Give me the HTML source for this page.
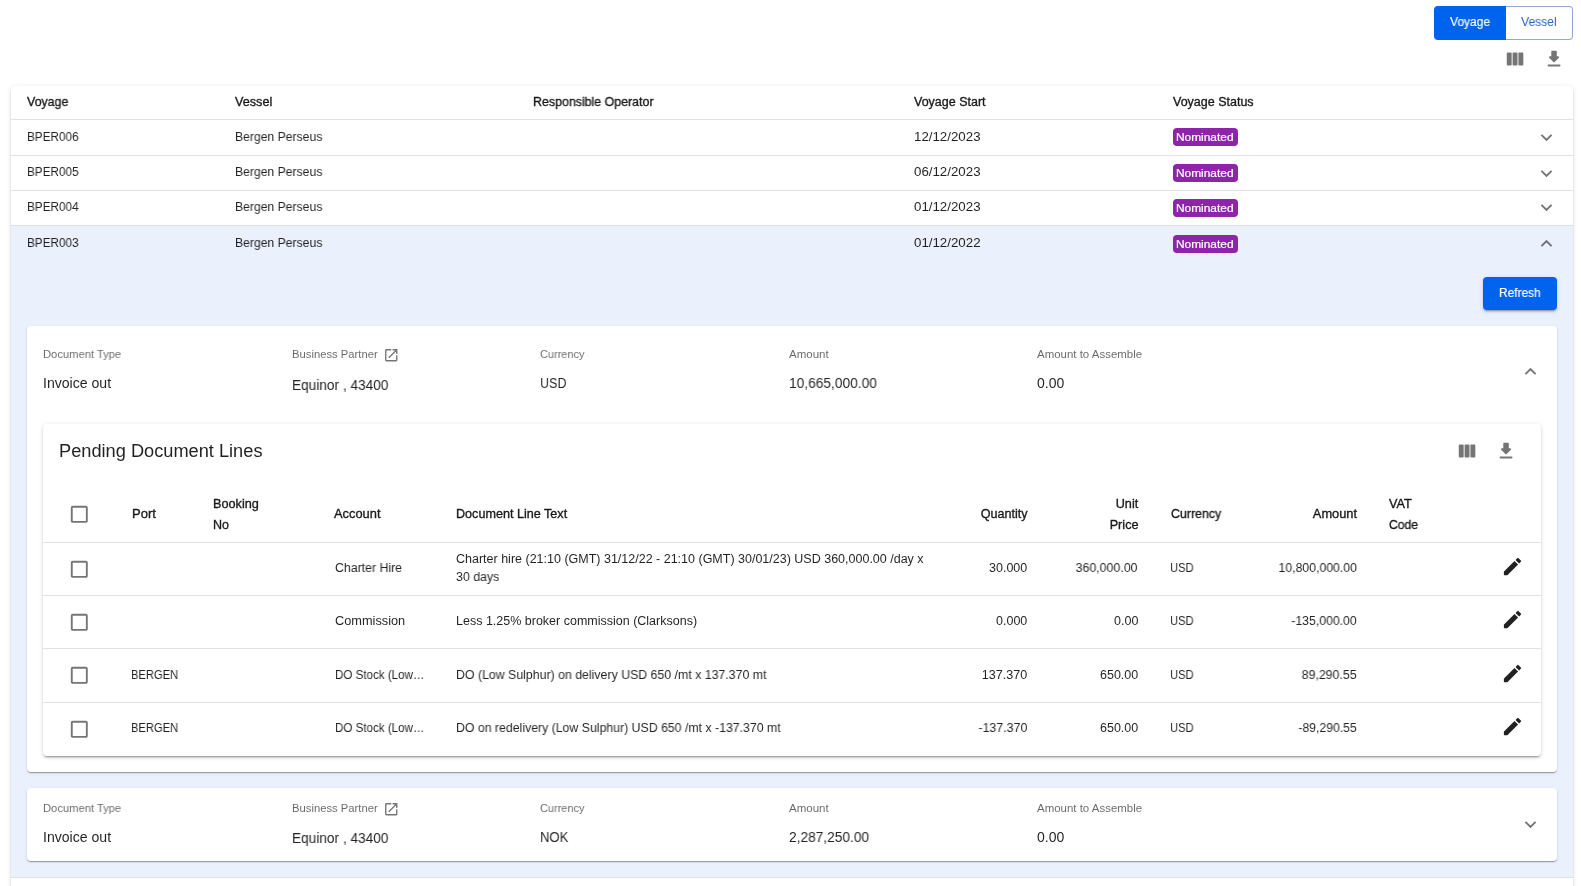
<!DOCTYPE html>
<html><head><meta charset="utf-8">
<style>
*{box-sizing:border-box;margin:0;padding:0}
html,body{width:1581px;height:886px;overflow:hidden;background:#fff}
body{position:relative;font-family:"Liberation Sans",sans-serif;color:rgba(0,0,0,0.87)}
.a{position:absolute}
.t{position:absolute;white-space:nowrap;line-height:1;will-change:transform}
svg{position:absolute;display:block}
</style></head><body>
<div class="a" style="left:1434px;top:6px;width:72px;height:34px;background:#0063ed;border-radius:4px 0 0 4px"></div>
<div class="a" style="left:1506px;top:6px;width:67px;height:34px;border:1px solid #90a8d2;border-left:none;border-radius:0 4px 4px 0"></div>
<div class="t" style="top:16px;font-size:12.5px;left:1449.5px;-webkit-text-stroke:0.35px currentColor;-webkit-text-stroke:0.15px currentColor;color:#fff;transform:scaleX(0.9625);transform-origin:left center;">Voyage</div>
<div class="t" style="top:16px;font-size:12.5px;left:1521.2px;color:#2862c6;transform:scaleX(0.97);transform-origin:left center;">Vessel</div>
<svg style="left:1504.1px;top:48px" width="22.1" height="22.1" viewBox="0 0 24 24"><g fill="rgba(0,0,0,0.54)"><rect x="3" y="5" width="5.33" height="14" rx="1"/><rect x="9.33" y="5" width="5.34" height="14" rx="1"/><rect x="15.67" y="5" width="5.33" height="14" rx="1"/></g></svg>
<svg style="left:1543.1px;top:48.1px" width="22.1" height="22.1" viewBox="0 0 24 24"><path fill="rgba(0,0,0,0.54)" d="M16.59 9H15V4c0-.55-.45-1-1-1h-4c-.55 0-1 .45-1 1v5H7.41c-.89 0-1.34 1.08-.71 1.71l4.59 4.59c.39.39 1.02.39 1.41 0l4.59-4.59c.63-.63.19-1.71-.7-1.71zM5 19c0 .55.45 1 1 1h12c.55 0 1-.45 1-1s-.45-1-1-1H6c-.55 0-1 .45-1 1z"/></svg>
<div class="a" style="left:11px;top:86px;width:1562px;height:900px;background:#fff;border-radius:4px;box-shadow:0px 3px 1px -2px rgba(0,0,0,0.2),0px 2px 2px 0px rgba(0,0,0,0.14),0px 1px 5px 0px rgba(0,0,0,0.12);"></div>
<div class="a" style="left:11px;top:225.5px;width:1562px;height:651.5px;background:#eaf1fd"></div>
<div class="a" style="left:11px;top:119px;width:1562px;height:1px;background:#e0e0e0"></div>
<div class="a" style="left:11px;top:155px;width:1562px;height:1px;background:#e0e0e0"></div>
<div class="a" style="left:11px;top:190px;width:1562px;height:1px;background:#e0e0e0"></div>
<div class="a" style="left:11px;top:225px;width:1562px;height:1px;background:#e0e0e0"></div>
<div class="a" style="left:11px;top:877px;width:1562px;height:1px;background:#e0e0e0"></div>
<div class="t" style="top:96px;font-size:12.5px;left:27px;-webkit-text-stroke:0.35px currentColor;transform:scaleX(0.991);transform-origin:left center;">Voyage</div>
<div class="t" style="top:96px;font-size:12.5px;left:235px;-webkit-text-stroke:0.35px currentColor;transform:scaleX(1.011);transform-origin:left center;">Vessel</div>
<div class="t" style="top:96px;font-size:12.5px;left:533px;-webkit-text-stroke:0.35px currentColor;transform:scaleX(0.991);transform-origin:left center;">Responsible Operator</div>
<div class="t" style="top:96px;font-size:12.5px;left:914px;-webkit-text-stroke:0.35px currentColor;">Voyage Start</div>
<div class="t" style="top:96px;font-size:12.5px;left:1173px;-webkit-text-stroke:0.35px currentColor;">Voyage Status</div>
<div class="t" style="top:131px;font-size:12.5px;left:27px;transform:scaleX(0.9391);transform-origin:left center;">BPER006</div>
<div class="t" style="top:131px;font-size:12.5px;left:235px;transform:scaleX(0.9737);transform-origin:left center;">Bergen Perseus</div>
<div class="t" style="top:131px;font-size:12.5px;left:914px;transform:scaleX(1.0634);transform-origin:left center;">12/12/2023</div>
<div class="a" style="left:1173px;top:128px;width:65px;height:18px;background:#8e24aa;border-radius:4px"></div>
<div class="t" style="top:132px;font-size:11.5px;left:1176.2px;-webkit-text-stroke:0.2px currentColor;color:#fff;transform:scaleX(1.0343);transform-origin:left center;">Nominated</div>
<svg style="left:1534.95px;top:125.7px" width="23" height="23" viewBox="0 0 24 24"><path fill="rgba(0,0,0,0.54)" d="M16.59 8.59 12 13.17 7.41 8.59 6 10l6 6 6-6z"/></svg>
<div class="t" style="top:166px;font-size:12.5px;left:27px;transform:scaleX(0.9391);transform-origin:left center;">BPER005</div>
<div class="t" style="top:166px;font-size:12.5px;left:235px;transform:scaleX(0.9737);transform-origin:left center;">Bergen Perseus</div>
<div class="t" style="top:166px;font-size:12.5px;left:914px;transform:scaleX(1.0634);transform-origin:left center;">06/12/2023</div>
<div class="a" style="left:1173px;top:164px;width:65px;height:18px;background:#8e24aa;border-radius:4px"></div>
<div class="t" style="top:168px;font-size:11.5px;left:1176.2px;-webkit-text-stroke:0.2px currentColor;color:#fff;transform:scaleX(1.0343);transform-origin:left center;">Nominated</div>
<svg style="left:1534.95px;top:161.7px" width="23" height="23" viewBox="0 0 24 24"><path fill="rgba(0,0,0,0.54)" d="M16.59 8.59 12 13.17 7.41 8.59 6 10l6 6 6-6z"/></svg>
<div class="t" style="top:201px;font-size:12.5px;left:27px;transform:scaleX(0.9391);transform-origin:left center;">BPER004</div>
<div class="t" style="top:201px;font-size:12.5px;left:235px;transform:scaleX(0.9737);transform-origin:left center;">Bergen Perseus</div>
<div class="t" style="top:201px;font-size:12.5px;left:914px;transform:scaleX(1.0634);transform-origin:left center;">01/12/2023</div>
<div class="a" style="left:1173px;top:199px;width:65px;height:18px;background:#8e24aa;border-radius:4px"></div>
<div class="t" style="top:203px;font-size:11.5px;left:1176.2px;-webkit-text-stroke:0.2px currentColor;color:#fff;transform:scaleX(1.0343);transform-origin:left center;">Nominated</div>
<svg style="left:1534.95px;top:196.4px" width="23" height="23" viewBox="0 0 24 24"><path fill="rgba(0,0,0,0.54)" d="M16.59 8.59 12 13.17 7.41 8.59 6 10l6 6 6-6z"/></svg>
<div class="t" style="top:237px;font-size:12.5px;left:27px;transform:scaleX(0.9391);transform-origin:left center;">BPER003</div>
<div class="t" style="top:237px;font-size:12.5px;left:235px;transform:scaleX(0.9737);transform-origin:left center;">Bergen Perseus</div>
<div class="t" style="top:237px;font-size:12.5px;left:914px;transform:scaleX(1.0634);transform-origin:left center;">01/12/2022</div>
<div class="a" style="left:1173px;top:235px;width:65px;height:18px;background:#8e24aa;border-radius:4px"></div>
<div class="t" style="top:239px;font-size:11.5px;left:1176.2px;-webkit-text-stroke:0.2px currentColor;color:#fff;transform:scaleX(1.0343);transform-origin:left center;">Nominated</div>
<svg style="left:1534.95px;top:231.7px" width="23" height="23" viewBox="0 0 24 24"><path fill="rgba(0,0,0,0.54)" d="M12 8l-6 6 1.41 1.41L12 10.83l4.59 4.58L18 14z"/></svg>
<div class="a" style="left:1483px;top:277px;width:74px;height:33px;background:#0063ed;border-radius:4px;box-shadow:0px 3px 1px -2px rgba(0,0,0,0.2),0px 2px 2px 0px rgba(0,0,0,0.14),0px 1px 5px 0px rgba(0,0,0,0.12)"></div>
<div class="t" style="top:287px;font-size:12px;left:1499px;-webkit-text-stroke:0.35px currentColor;-webkit-text-stroke:0.15px currentColor;color:#fff;transform:scaleX(0.9903);transform-origin:left center;">Refresh</div>
<div class="a" style="left:27px;top:326px;width:1530px;height:446px;background:#fff;border-radius:4px;box-shadow:0px 2px 1px -1px rgba(0,0,0,0.2),0px 1px 1px 0px rgba(0,0,0,0.14),0px 1px 3px 0px rgba(0,0,0,0.12);"></div>
<div class="t" style="top:349px;font-size:11.25px;left:43px;color:rgba(0,0,0,0.6);transform:scaleX(0.9938);transform-origin:left center;">Document Type</div>
<div class="t" style="top:349px;font-size:11.25px;left:292px;color:rgba(0,0,0,0.6);">Business Partner</div>
<svg style="left:383px;top:346.5px" width="16.5" height="16.5" viewBox="0 0 24 24"><path fill="rgba(0,0,0,0.54)" d="M19 19H5V5h7V3H5c-1.11 0-2 .9-2 2v14c0 1.1.89 2 2 2h14c1.1 0 2-.9 2-2v-7h-2v7zM14 3v2h3.59l-9.83 9.83 1.41 1.41L19 6.41V10h2V3h-7z"/></svg>
<div class="t" style="top:349px;font-size:11.25px;left:540px;color:rgba(0,0,0,0.6);transform:scaleX(0.9736);transform-origin:left center;">Currency</div>
<div class="t" style="top:349px;font-size:11.25px;left:789px;color:rgba(0,0,0,0.6);transform:scaleX(1.0242);transform-origin:left center;">Amount</div>
<div class="t" style="top:349px;font-size:11.25px;left:1037px;color:rgba(0,0,0,0.6);transform:scaleX(1.0185);transform-origin:left center;">Amount to Assemble</div>
<div class="t" style="top:376px;font-size:14px;left:43px;transform:scaleX(1.006);transform-origin:left center;">Invoice out</div>
<div class="t" style="top:378px;font-size:14px;left:292px;transform:scaleX(0.9753);transform-origin:left center;">Equinor , 43400</div>
<div class="t" style="top:376px;font-size:14px;left:540px;transform:scaleX(0.899);transform-origin:left center;">USD</div>
<div class="t" style="top:376px;font-size:14px;left:789px;transform:scaleX(0.9817);transform-origin:left center;">10,665,000.00</div>
<div class="t" style="top:376px;font-size:14px;left:1037px;">0.00</div>
<svg style="left:1518.95px;top:360px" width="23" height="23" viewBox="0 0 24 24"><path fill="rgba(0,0,0,0.54)" d="M12 8l-6 6 1.41 1.41L12 10.83l4.59 4.58L18 14z"/></svg>
<div class="a" style="left:43px;top:424px;width:1498px;height:332px;background:#fff;border-radius:4px;box-shadow:0px 3px 1px -2px rgba(0,0,0,0.2),0px 2px 2px 0px rgba(0,0,0,0.14),0px 1px 5px 0px rgba(0,0,0,0.12);"></div>
<div class="t" style="top:442px;font-size:18px;left:59.2px;transform:scaleX(1.0117);transform-origin:left center;">Pending Document Lines</div>
<svg style="left:1455.8px;top:439.8px" width="22.1" height="22.1" viewBox="0 0 24 24"><g fill="rgba(0,0,0,0.54)"><rect x="3" y="5" width="5.33" height="14" rx="1"/><rect x="9.33" y="5" width="5.34" height="14" rx="1"/><rect x="15.67" y="5" width="5.33" height="14" rx="1"/></g></svg>
<svg style="left:1494.9px;top:439.5px" width="22.1" height="22.1" viewBox="0 0 24 24"><path fill="rgba(0,0,0,0.54)" d="M16.59 9H15V4c0-.55-.45-1-1-1h-4c-.55 0-1 .45-1 1v5H7.41c-.89 0-1.34 1.08-.71 1.71l4.59 4.59c.39.39 1.02.39 1.41 0l4.59-4.59c.63-.63.19-1.71-.7-1.71zM5 19c0 .55.45 1 1 1h12c.55 0 1-.45 1-1s-.45-1-1-1H6c-.55 0-1 .45-1 1z"/></svg>
<div class="a" style="left:43px;top:542px;width:1498px;height:1px;background:#e0e0e0"></div>
<div class="a" style="left:43px;top:595px;width:1498px;height:1px;background:#e0e0e0"></div>
<div class="a" style="left:43px;top:648px;width:1498px;height:1px;background:#e0e0e0"></div>
<div class="a" style="left:43px;top:702px;width:1498px;height:1px;background:#e0e0e0"></div>
<svg style="left:68.1px;top:503.1px" width="22.6" height="22.6" viewBox="0 0 24 24"><path fill="rgba(0,0,0,0.54)" d="M19 5v14H5V5h14m0-2H5c-1.11 0-2 .9-2 2v14c0 1.1.89 2 2 2h14c1.1 0 2-.9 2-2V5c0-1.1-.9-2-2-2z"/></svg>
<div class="t" style="top:508px;font-size:12.5px;left:132px;-webkit-text-stroke:0.35px currentColor;transform:scaleX(1.0416);transform-origin:left center;">Port</div>
<div class="t" style="top:498px;font-size:12.5px;left:213px;-webkit-text-stroke:0.35px currentColor;transform:scaleX(1.0142);transform-origin:left center;">Booking</div>
<div class="t" style="top:519px;font-size:12.5px;left:213px;-webkit-text-stroke:0.35px currentColor;">No</div>
<div class="t" style="top:508px;font-size:12.5px;left:334px;-webkit-text-stroke:0.35px currentColor;transform:scaleX(1.0297);transform-origin:left center;">Account</div>
<div class="t" style="top:508px;font-size:12.5px;left:456px;-webkit-text-stroke:0.35px currentColor;transform:scaleX(1.0081);transform-origin:left center;">Document Line Text</div>
<div class="t" style="top:508px;font-size:12.5px;right:553px;-webkit-text-stroke:0.35px currentColor;transform:scaleX(1.0074);transform-origin:right center;">Quantity</div>
<div class="t" style="top:498px;font-size:12.5px;right:442.8px;-webkit-text-stroke:0.35px currentColor;transform:scaleX(1.0119);transform-origin:right center;">Unit</div>
<div class="t" style="top:519px;font-size:12.5px;right:442.8px;-webkit-text-stroke:0.35px currentColor;transform:scaleX(1.0115);transform-origin:right center;">Price</div>
<div class="t" style="top:508px;font-size:12.5px;left:1170.5px;-webkit-text-stroke:0.35px currentColor;transform:scaleX(0.9886);transform-origin:left center;">Currency</div>
<div class="t" style="top:508px;font-size:12.5px;right:224px;-webkit-text-stroke:0.35px currentColor;transform:scaleX(1.0268);transform-origin:right center;">Amount</div>
<div class="t" style="top:498px;font-size:12.5px;left:1389.3px;-webkit-text-stroke:0.35px currentColor;transform:scaleX(1.0125);transform-origin:left center;">VAT</div>
<div class="t" style="top:519px;font-size:12.5px;left:1389.3px;-webkit-text-stroke:0.35px currentColor;transform:scaleX(0.9702);transform-origin:left center;">Code</div>
<svg style="left:68.1px;top:558.05px" width="22.6" height="22.6" viewBox="0 0 24 24"><path fill="rgba(0,0,0,0.54)" d="M19 5v14H5V5h14m0-2H5c-1.11 0-2 .9-2 2v14c0 1.1.89 2 2 2h14c1.1 0 2-.9 2-2V5c0-1.1-.9-2-2-2z"/></svg>
<div class="t" style="top:562px;font-size:12.5px;left:335px;transform:scaleX(0.986);transform-origin:left center;">Charter Hire</div>
<div class="t" style="top:553px;font-size:12.5px;left:456px;">Charter hire (21:10 (GMT) 31/12/22 - 21:10 (GMT) 30/01/23) USD 360,000.00 /day x</div>
<div class="t" style="top:571px;font-size:12.5px;left:456px;transform:scaleX(0.9886);transform-origin:left center;">30 days</div>
<div class="t" style="top:562px;font-size:12.5px;right:553.5px;">30.000</div>
<div class="t" style="top:562px;font-size:12.5px;right:443px;transform:scaleX(0.9905);transform-origin:right center;">360,000.00</div>
<div class="t" style="top:562px;font-size:12.5px;left:1170.3px;transform:scaleX(0.8988);transform-origin:left center;">USD</div>
<div class="t" style="top:562px;font-size:12.5px;right:224px;transform:scaleX(0.9814);transform-origin:right center;">10,800,000.00</div>
<svg style="left:1500.8px;top:554.6px" width="23" height="23" viewBox="0 0 24 24"><path fill="rgba(0,0,0,0.87)" d="M3 17.46v3.04c0 .28.22.5.5.5h3.04c.13 0 .26-.05.35-.15L17.81 9.94l-3.75-3.75L3.15 17.1c-.1.1-.15.22-.15.36zM20.71 7.04a.996.996 0 0 0 0-1.41l-2.34-2.34a.996.996 0 0 0-1.41 0l-1.83 1.83 3.75 3.75 1.83-1.83z"/></svg>
<svg style="left:68.1px;top:610.95px" width="22.6" height="22.6" viewBox="0 0 24 24"><path fill="rgba(0,0,0,0.54)" d="M19 5v14H5V5h14m0-2H5c-1.11 0-2 .9-2 2v14c0 1.1.89 2 2 2h14c1.1 0 2-.9 2-2V5c0-1.1-.9-2-2-2z"/></svg>
<div class="t" style="top:615px;font-size:12.5px;left:335px;transform:scaleX(1.0209);transform-origin:left center;">Commission</div>
<div class="t" style="top:615px;font-size:12.5px;left:456px;">Less 1.25% broker commission (Clarksons)</div>
<div class="t" style="top:615px;font-size:12.5px;right:553.5px;">0.000</div>
<div class="t" style="top:615px;font-size:12.5px;right:443px;">0.00</div>
<div class="t" style="top:615px;font-size:12.5px;left:1170.3px;transform:scaleX(0.8988);transform-origin:left center;">USD</div>
<div class="t" style="top:615px;font-size:12.5px;right:224px;transform:scaleX(0.9803);transform-origin:right center;">-135,000.00</div>
<svg style="left:1500.8px;top:608px" width="23" height="23" viewBox="0 0 24 24"><path fill="rgba(0,0,0,0.87)" d="M3 17.46v3.04c0 .28.22.5.5.5h3.04c.13 0 .26-.05.35-.15L17.81 9.94l-3.75-3.75L3.15 17.1c-.1.1-.15.22-.15.36zM20.71 7.04a.996.996 0 0 0 0-1.41l-2.34-2.34a.996.996 0 0 0-1.41 0l-1.83 1.83 3.75 3.75 1.83-1.83z"/></svg>
<svg style="left:68.1px;top:664.15px" width="22.6" height="22.6" viewBox="0 0 24 24"><path fill="rgba(0,0,0,0.54)" d="M19 5v14H5V5h14m0-2H5c-1.11 0-2 .9-2 2v14c0 1.1.89 2 2 2h14c1.1 0 2-.9 2-2V5c0-1.1-.9-2-2-2z"/></svg>
<div class="t" style="top:669px;font-size:12.5px;left:131.3px;transform:scaleX(0.8929);transform-origin:left center;">BERGEN</div>
<div class="t" style="top:669px;font-size:12.5px;left:335px;transform:scaleX(0.9273);transform-origin:left center;">DO Stock (Low…</div>
<div class="t" style="top:669px;font-size:12.5px;left:456px;transform:scaleX(0.9864);transform-origin:left center;">DO (Low Sulphur) on delivery USD 650 /mt x 137.370 mt</div>
<div class="t" style="top:669px;font-size:12.5px;right:553.5px;transform:scaleX(1.0059);transform-origin:right center;">137.370</div>
<div class="t" style="top:669px;font-size:12.5px;right:443px;">650.00</div>
<div class="t" style="top:669px;font-size:12.5px;left:1170.3px;transform:scaleX(0.8988);transform-origin:left center;">USD</div>
<div class="t" style="top:669px;font-size:12.5px;right:224px;transform:scaleX(0.9879);transform-origin:right center;">89,290.55</div>
<svg style="left:1500.8px;top:661.5px" width="23" height="23" viewBox="0 0 24 24"><path fill="rgba(0,0,0,0.87)" d="M3 17.46v3.04c0 .28.22.5.5.5h3.04c.13 0 .26-.05.35-.15L17.81 9.94l-3.75-3.75L3.15 17.1c-.1.1-.15.22-.15.36zM20.71 7.04a.996.996 0 0 0 0-1.41l-2.34-2.34a.996.996 0 0 0-1.41 0l-1.83 1.83 3.75 3.75 1.83-1.83z"/></svg>
<svg style="left:68.1px;top:718.25px" width="22.6" height="22.6" viewBox="0 0 24 24"><path fill="rgba(0,0,0,0.54)" d="M19 5v14H5V5h14m0-2H5c-1.11 0-2 .9-2 2v14c0 1.1.89 2 2 2h14c1.1 0 2-.9 2-2V5c0-1.1-.9-2-2-2z"/></svg>
<div class="t" style="top:722px;font-size:12.5px;left:131.3px;transform:scaleX(0.8929);transform-origin:left center;">BERGEN</div>
<div class="t" style="top:722px;font-size:12.5px;left:335px;transform:scaleX(0.9273);transform-origin:left center;">DO Stock (Low…</div>
<div class="t" style="top:722px;font-size:12.5px;left:456px;transform:scaleX(0.9838);transform-origin:left center;">DO on redelivery (Low Sulphur) USD 650 /mt x -137.370 mt</div>
<div class="t" style="top:722px;font-size:12.5px;right:553.5px;transform:scaleX(0.9908);transform-origin:right center;">-137.370</div>
<div class="t" style="top:722px;font-size:12.5px;right:443px;">650.00</div>
<div class="t" style="top:722px;font-size:12.5px;left:1170.3px;transform:scaleX(0.8988);transform-origin:left center;">USD</div>
<div class="t" style="top:722px;font-size:12.5px;right:224px;transform:scaleX(0.9767);transform-origin:right center;">-89,290.55</div>
<svg style="left:1500.8px;top:714.9px" width="23" height="23" viewBox="0 0 24 24"><path fill="rgba(0,0,0,0.87)" d="M3 17.46v3.04c0 .28.22.5.5.5h3.04c.13 0 .26-.05.35-.15L17.81 9.94l-3.75-3.75L3.15 17.1c-.1.1-.15.22-.15.36zM20.71 7.04a.996.996 0 0 0 0-1.41l-2.34-2.34a.996.996 0 0 0-1.41 0l-1.83 1.83 3.75 3.75 1.83-1.83z"/></svg>
<div class="a" style="left:27px;top:788px;width:1530px;height:73px;background:#fff;border-radius:4px;box-shadow:0px 2px 1px -1px rgba(0,0,0,0.2),0px 1px 1px 0px rgba(0,0,0,0.14),0px 1px 3px 0px rgba(0,0,0,0.12);"></div>
<div class="t" style="top:803px;font-size:11.25px;left:43px;color:rgba(0,0,0,0.6);transform:scaleX(0.9938);transform-origin:left center;">Document Type</div>
<div class="t" style="top:803px;font-size:11.25px;left:292px;color:rgba(0,0,0,0.6);">Business Partner</div>
<svg style="left:383px;top:800.5px" width="16.5" height="16.5" viewBox="0 0 24 24"><path fill="rgba(0,0,0,0.54)" d="M19 19H5V5h7V3H5c-1.11 0-2 .9-2 2v14c0 1.1.89 2 2 2h14c1.1 0 2-.9 2-2v-7h-2v7zM14 3v2h3.59l-9.83 9.83 1.41 1.41L19 6.41V10h2V3h-7z"/></svg>
<div class="t" style="top:803px;font-size:11.25px;left:540px;color:rgba(0,0,0,0.6);transform:scaleX(0.9736);transform-origin:left center;">Currency</div>
<div class="t" style="top:803px;font-size:11.25px;left:789px;color:rgba(0,0,0,0.6);transform:scaleX(1.0242);transform-origin:left center;">Amount</div>
<div class="t" style="top:803px;font-size:11.25px;left:1037px;color:rgba(0,0,0,0.6);transform:scaleX(1.0185);transform-origin:left center;">Amount to Assemble</div>
<div class="t" style="top:830px;font-size:14px;left:43px;transform:scaleX(1.006);transform-origin:left center;">Invoice out</div>
<div class="t" style="top:831px;font-size:14px;left:292px;transform:scaleX(0.9753);transform-origin:left center;">Equinor , 43400</div>
<div class="t" style="top:830px;font-size:14px;left:540px;transform:scaleX(0.9361);transform-origin:left center;">NOK</div>
<div class="t" style="top:830px;font-size:14px;left:789px;transform:scaleX(0.9788);transform-origin:left center;">2,287,250.00</div>
<div class="t" style="top:830px;font-size:14px;left:1037px;">0.00</div>
<svg style="left:1518.95px;top:812.6px" width="23" height="23" viewBox="0 0 24 24"><path fill="rgba(0,0,0,0.54)" d="M16.59 8.59 12 13.17 7.41 8.59 6 10l6 6 6-6z"/></svg>
</body></html>
